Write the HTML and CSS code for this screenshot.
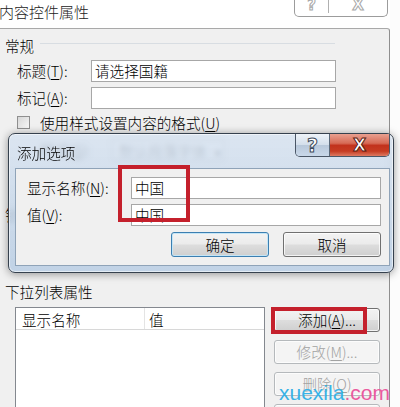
FILE: index.html
```html
<!DOCTYPE html>
<html lang="zh-CN">
<head>
<meta charset="utf-8">
<title>内容控件属性</title>
<link rel="stylesheet" href="styles.css">
</head>
<body>
<div class="screen">
  <div class="win">
    <div class="win-title">
      <span class="win-caption">内容控件属性</span>
      <div class="caps">
        <span class="cap cap-help">?</span>
        <span class="cap cap-close">X</span>
      </div>
    </div>
    <div class="win-body">
      <div class="group"><span>常规</span><i class="rule"></i></div>
      <div class="fields">
        <label>标题(<u>T</u>):</label><div class="input">请选择国籍</div>
        <label>标记(<u>A</u>):</label><div class="input"></div>
      </div>
      <div class="check"><span class="box"></span>使用样式设置内容的格式(<u>U</u>)</div>
      <div class="style-row"><label>样式(<u>S</u>):</label><div class="combo">默认段落字体<span class="arrow">▾</span></div></div>
      <div class="group lock"><span>锁定</span><i class="rule"></i></div>
      <div class="group-plain">下拉列表属性</div>
      <div class="list-area">
        <div class="list">
          <div class="list-head"><span class="col1">显示名称</span><span class="col2">值</span></div>
        </div>
        <div class="side-btns">
          <button class="btn">添加(<u>A</u>)...</button>
          <button class="btn dis">修改(<u>M</u>)...</button>
          <button class="btn dis">删除(<u>O</u>)</button>
          <button class="btn dis">上移(<u>U</u>)</button>
        </div>
      </div>
    </div>
  </div>

  <div class="dlg">
    <div class="dlg-title">
      <span class="dlg-caption">添加选项</span>
      <div class="dcaps">
        <span class="dcap dcap-help">?</span>
        <span class="dcap dcap-close">X</span>
      </div>
    </div>
    <div class="dlg-panel">
      <div class="dfields">
        <label>显示名称(<u>N</u>):</label><div class="input">中国</div>
        <label>值(<u>V</u>):</label><div class="input">中国</div>
      </div>
      <div class="dbtns">
        <button class="btn dbtn def">确定</button>
        <button class="btn dbtn">取消</button>
      </div>
    </div>
  </div>

  <div class="hl hl1"></div>
  <div class="hl hl2"></div>
  <div class="wm">xuexila<span class="wm-com">.com</span></div>
</div>
</body>
</html>
```

FILE: styles.css
```css
body {
  margin: 0;
  background: #fff;
  font-family: "Noto Sans CJK SC", "Noto Sans", sans-serif;
  font-size: 14.6px;
  font-weight: 300;
  color: #000;
}

.screen {
  position: relative;
  width: 400px;
  height: 407px;
  overflow: hidden;
  background: #fcfcfc;
}

u { text-decoration: underline; text-underline-offset: 2px; }

/* ---------- background window ---------- */
.win { width: 390px; }

.win-title {
  height: 28px;
  display: flex;
  justify-content: space-between;
  align-items: flex-start;
  background: #fff;
}

.win-caption {
  font-size: 15px;
  line-height: 20px;
  margin-top: 2px;
  margin-left: -1px;
  color: #222;
}

.caps {
  display: flex;
  height: 16px;
  margin-right: 2px;
  border: 1px solid #9c9c9c;
  border-top: 0;
  border-radius: 0 0 5px 5px;
  overflow: hidden;
}

.cap {
  display: flex;
  align-items: center;
  justify-content: center;
  height: 16px;
  font-family: "DejaVu Sans", sans-serif;
  font-weight: bold;
  font-size: 15px;
  line-height: 16px;
  color: #fff;
  -webkit-text-stroke: 1px #a8a8a8;
  margin-top: -3px;
}
.cap-help { width: 33px; border-right: 1px solid #b0b0b0; }
.cap-close { width: 58px; }

.win-body {
  height: 378px;
  background: #f0f0f0;
  border-top: 1px solid #a9a9a9;
  border-right: 1px solid #8e8e8e;
  border-top-right-radius: 3px;
}

.group {
  display: flex;
  height: 20px;
  line-height: 20px;
  margin-top: 7px;
  padding-left: 5px;
}
.group .rule {
  width: 295px;
  height: 0;
  margin-top: 7px;
  margin-left: 6px;
  border-top: 1px solid #d8dde2;
}
.group.lock { margin-top: 44px; }

.fields {
  display: grid;
  grid-template-columns: 74px 245px;
  row-gap: 5px;
  margin-top: 4px;
  padding-left: 17px;
}
.fields label { line-height: 22px; }

.input {
  height: 22px;
  box-sizing: border-box;
  border: 1px solid #a7a7a7;
  background: #fff;
  padding-left: 3px;
  line-height: 20px;
}

.check {
  display: flex;
  align-items: center;
  height: 18px;
  margin-top: 4px;
  padding-left: 17px;
}
.box {
  width: 13px;
  height: 13px;
  box-sizing: border-box;
  border: 1px solid #8f8f8f;
  background: linear-gradient(135deg, #d6d6d6, #f8f8f8);
  margin-right: 10px;
}

.style-row {
  display: flex;
  height: 22px;
  margin-top: 8px;
  padding-left: 40px;
  line-height: 22px;
}
.style-row label { width: 72px; }
.combo {
  width: 112px;
  box-sizing: border-box;
  padding-left: 6px;
  border: 1px solid #a7a7a7;
  background: #f6f6f6;
  color: #333;
}
.arrow { margin-left: 8px; font-size: 11px; }

.group-plain {
  height: 20px;
  line-height: 20px;
  margin-top: 57px;
  padding-left: 5px;
}

.list-area {
  display: flex;
  align-items: flex-start;
  margin-top: 5px;
  padding-left: 15px;
}
.list {
  width: 250px;
  height: 110px;
  box-sizing: border-box;
  border: 1px solid #84888f;
  background: #fff;
}
.list-head {
  display: flex;
  height: 21px;
  border-bottom: 1px solid #d8d8d8;
  line-height: 23px;
}
.col1 {
  width: 129px;
  box-sizing: border-box;
  padding-left: 6px;
  border-right: 1px solid #e4e4e4;
}
.col2 { padding-left: 4px; }

.side-btns {
  display: flex;
  flex-direction: column;
  gap: 8px;
  margin-left: 9px;
  padding-top: 1px;
}

.btn {
  height: 24px;
  width: 106px;
  padding: 0;
  box-sizing: border-box;
  border: 1px solid #707070;
  border-radius: 3px;
  background: linear-gradient(#f3f3f3 0%, #ebebeb 48%, #dddddd 52%, #cfcfcf 100%);
  box-shadow: inset 0 0 0 1px rgba(255, 255, 255, 0.75);
  font: inherit;
  color: #000;
  line-height: 20px;
}
.btn.dis {
  color: #a2a2a2;
  border-color: #b5b9bc;
  background: #f4f4f4;
}

/* ---------- add dialog ---------- */
.dlg {
  position: absolute;
  left: 8px;
  top: 133px;
  width: 386px;
  height: 140px;
  box-sizing: border-box;
  display: flex;
  flex-direction: column;
  border: 1px solid #36414e;
  border-radius: 7px;
  background: linear-gradient(rgba(214, 226, 240, 0.82), rgba(186, 206, 228, 0.88));
  backdrop-filter: blur(2.5px);
  box-shadow: 0 1px 8px rgba(0, 0, 0, 0.4), inset 0 0 0 1px rgba(255, 255, 255, 0.55);
}

.dlg-title {
  height: 34px;
  flex: none;
  display: flex;
  justify-content: space-between;
  align-items: flex-start;
}
.dlg-caption {
  line-height: 20px;
  margin-top: 9px;
  margin-left: 8px;
}

.dcaps {
  display: flex;
  flex: none;
  height: 22px;
  margin-right: 3px;
  border: 1px solid #4a5666;
  border-top: 0;
  border-radius: 0 0 5px 5px;
  overflow: hidden;
}
.dcap {
  display: flex;
  flex: none;
  align-items: center;
  justify-content: center;
  height: 22px;
  font-family: "DejaVu Sans", sans-serif;
  font-weight: bold;
  font-size: 19px;
  line-height: 20px;
  color: #fff;
}
.dcap-help {
  width: 33px;
  border-right: 1px solid #5a6878;
  background-color: #c8d6e6;
  background-image: linear-gradient(#eef3f9 0%, #d4dfeb 48%, #b8c8da 52%, #c9d8e9 100%);
  -webkit-text-stroke: 1px #3d4a5a;
}
.dcap-close {
  width: 59px;
  font-size: 17px;
  background-color: #c8402a;
  background-image: linear-gradient(#e9a090 0%, #d66a55 42%, #c2321c 52%, #c63c22 78%, #de7a62 100%);
  -webkit-text-stroke: 1px #5a1a10;
}

.dlg-panel {
  flex: 1;
  margin: 0 3px 6px 6px;
  background: #f0f0f0;
  border: 1px solid #8fa3b8;
}

.dfields {
  display: grid;
  grid-template-columns: 104px 250px;
  row-gap: 5px;
  padding: 8px 0 0 11px;
}
.dfields label { line-height: 22px; }
.dfields .input { padding-left: 3px; }

.dbtns {
  display: flex;
  gap: 14px;
  margin-top: 6px;
  padding-left: 155px;
}
.dbtn {
  width: 98px;
  height: 25px;
  line-height: 21px;
}
.dbtn.def {
  border-color: #3c7fb1;
  box-shadow: inset 0 0 0 1px #c4e5f6;
}

/* ---------- overlays ---------- */
.hl {
  position: absolute;
  box-sizing: border-box;
  border: 4px solid #c4202c;
}
.hl1 { left: 118px; top: 165px; width: 72px; height: 57px; }
.hl2 { left: 271px; top: 307px; width: 96px; height: 27px; }

.wm {
  position: absolute;
  left: 279px;
  top: 381px;
  font-family: "Liberation Sans", Arial, sans-serif;
  font-size: 21px;
  font-weight: normal;
  line-height: 24px;
  color: #38b2e6;
}
.wm-com { color: #ea5a9e; }
```
